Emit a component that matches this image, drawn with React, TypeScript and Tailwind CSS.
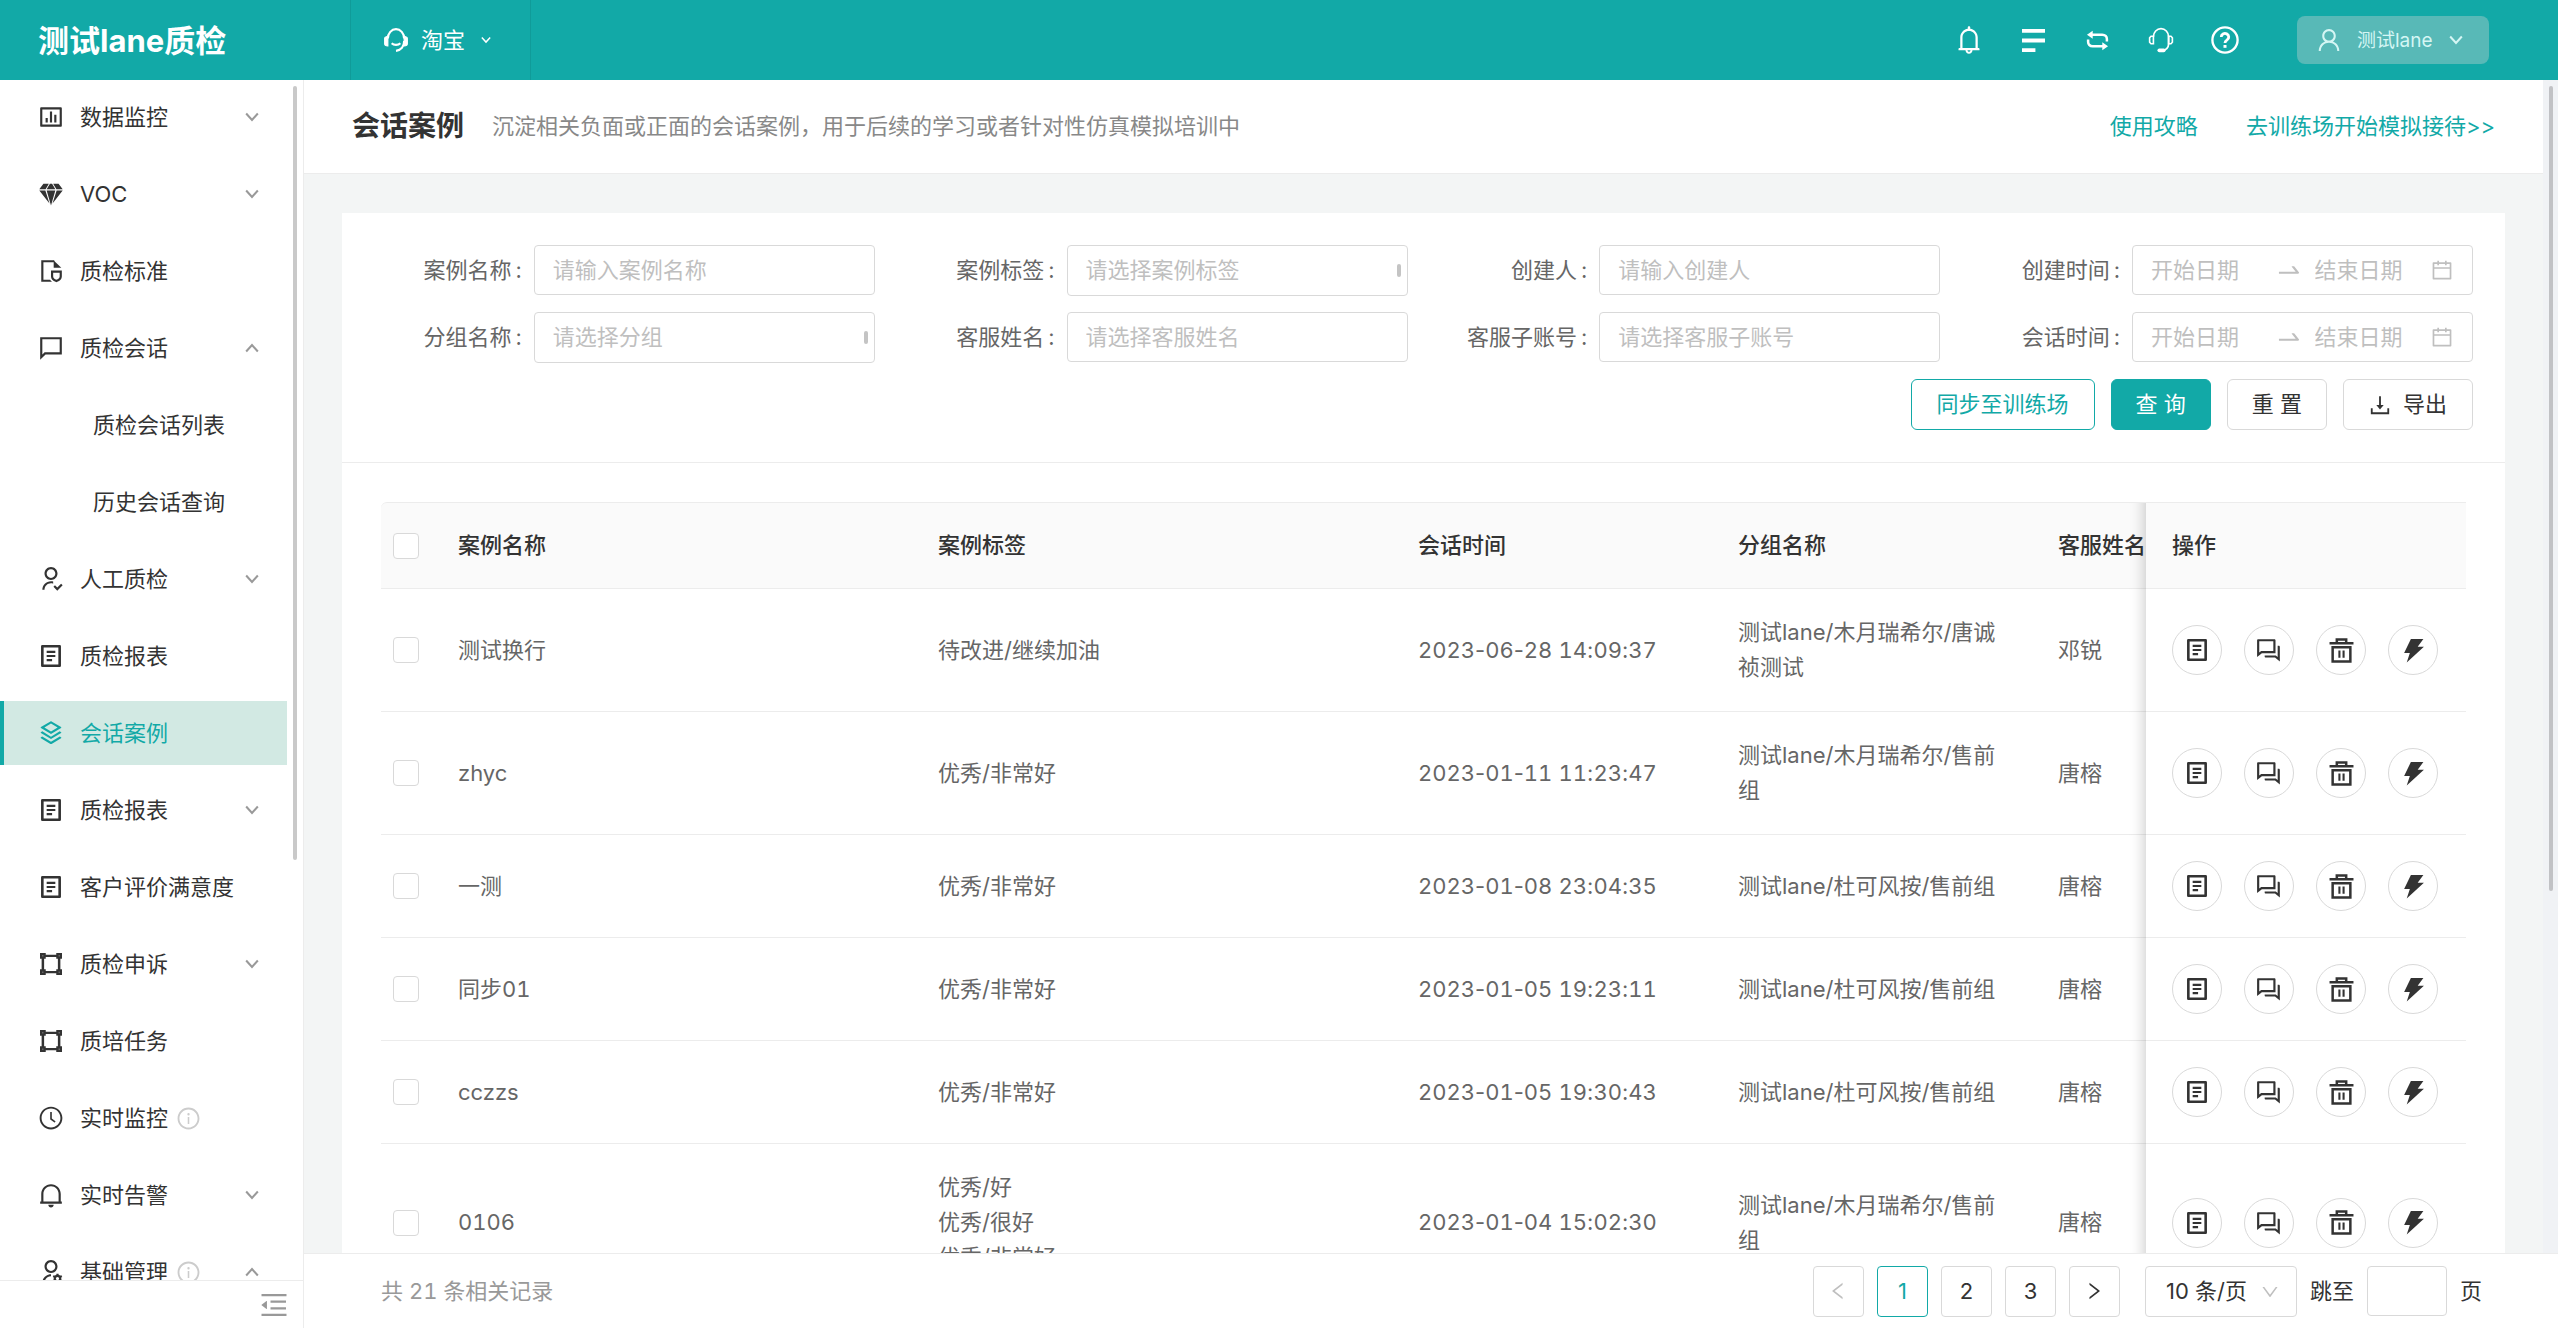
import type { ReactNode } from "react"
import clsx from "clsx"
import {
  AiOutlineBell,
  AiOutlineCalendar,
  AiOutlineClockCircle,
  AiOutlineDown,
  AiOutlineInfoCircle,
  AiOutlineLeft,
  AiOutlineMenuFold,
  AiOutlineRight,
  AiOutlineSwapRight,
  AiOutlineUser,
} from "react-icons/ai"
import {
  RiBarChartBoxLine,
  RiNotification2Line,
  RiQuestionAnswerLine,
  RiStackLine,
  RiUserFollowLine,
  RiUserSettingsLine,
} from "react-icons/ri"

interface IconProps {
  className?: string
}

function Svg({ className, children }: IconProps & { children: ReactNode }) {
  return (
    <svg
      viewBox="0 0 24 24"
      className={className}
      fill="none"
      stroke="currentColor"
      strokeWidth="2"
      aria-hidden="true"
    >
      {children}
    </svg>
  )
}

function Chevron({ className }: IconProps) {
  return (
    <Svg className={className}>
      <path d="m2 6 10 11L22 6" strokeWidth="3.5" />
    </Svg>
  )
}

function GemIcon({ className }: IconProps) {
  return (
    <svg viewBox="0 0 24 24" className={className} fill="currentColor" aria-hidden="true">
      <path d="M5 2.5h5L7 7.5H1.2zM11 2.5h2l3 5H8zM14 2.5h5l3.8 5H17zM1.2 8.7h5.6l3.8 12zM8 8.7h8l-4 14zM17.2 8.7h5.6l-9.4 12z" />
    </svg>
  )
}

function FileShieldIcon({ className }: IconProps) {
  return (
    <Svg className={className}>
      <path d="M13 21H4V3h11" />
      <path d="M14.5 2.2 21.5 9h-7z" fill="currentColor" stroke="none" />
      <path d="M13 12.5h8V17c0 2-1.5 3.5-4 4.5-2.5-1-4-2.500-4-4.500z" stroke="#fff" strokeWidth="5" />
      <path d="M13 12.5h8V17c0 2-1.5 3.200-4 4.200-2.500-1-4-2.200-4-4.200z" />
    </Svg>
  )
}

function ChatIcon({ className }: IconProps) {
  return (
    <Svg className={className}>
      <path d="M3 20.5V3h18v14H6.5z" />
    </Svg>
  )
}

function DocIcon({ className }: IconProps) {
  return (
    <Svg className={className}>
      <path d="M4 3h16v18H4z" strokeWidth="2.4" strokeLinejoin="round" />
      <path d="M8 8.2h8M8 12h8M8 15.800h5" />
    </Svg>
  )
}

function FrameIcon({ className }: IconProps) {
  return (
    <Svg className={className}>
      <path d="M3 3h3v3H3zM18 3h3v3h-3zM3 18h3v3H3zM18 18h3v3h-3zM7 4.500h10M7 19.500h10M4.500 7v10M19.500 7v10" strokeWidth="2.300" />
    </Svg>
  )
}

function TrashIcon({ className }: IconProps) {
  return (
    <Svg className={className}>
      <path d="M0.500 5h23M7.500 4V1.500h9V4M3.500 8.800h17v13.700h-17z" strokeWidth="2.400" />
      <path d="M10 12v7M14 12v7" />
    </Svg>
  )
}

function BoltIcon({ className }: IconProps) {
  return (
    <svg viewBox="0 0 24 24" className={className} fill="currentColor" aria-hidden="true">
      <path d="M9.500 1h12L16 8.500h6L5.500 23.500l3-9H3z" />
    </svg>
  )
}

function ExportIcon({ className }: IconProps) {
  return (
    <Svg className={className}>
      <path d="M12 2.500v12M3 15.500V21h18v-5.500" />
      <path d="m8 12 4 5 4-5z" fill="currentColor" stroke="none" />
    </Svg>
  )
}

function AgentIcon({ className }: IconProps) {
  return (
    <Svg className={className}>
      <path d="M4.500 10.500a7.500 8.500 0 0 1 15 0M19.500 13c0 5-3 8.500-7.500 9" />
      <path d="M1.500 10.500c0-1.500 3-2 3-2v9c-2 0-3-1-3-2zM22.500 10.500c0-1.500-3-2-3-2v9c2 0 3-1 3-2z" fill="currentColor" strokeWidth="1" />
      <path d="M8 15c2 2 6 2 8 0" />
    </Svg>
  )
}

function HeadsetIcon({ className }: IconProps) {
  return (
    <Svg className={className}>
      <path d="M5 9a7 7.500 0 0 1 14 0v7c0 3-2.500 5.500-6 5.500" strokeWidth="1.600" />
      <path d="M5 8.500H2.800L1.500 10v4l1.300 1.500H5zM19 8.500h2.200L22.500 10v4l-1.300 1.500H19z" strokeWidth="1.500" />
      <path d="M10.500 21.500h4" strokeWidth="3.500" strokeLinecap="round" />
    </Svg>
  )
}

function ListIcon({ className }: IconProps) {
  return (
    <Svg className={className}>
      <path d="M0 2h24M0 12h24M0 22h14" strokeWidth="4" />
    </Svg>
  )
}

function LoopIcon({ className }: IconProps) {
  return (
    <Svg className={className}>
      <path d="M6 6h11c3 0 4.800 2 4.800 4.500V13M18 18H7c-3 0-4.800-2-4.800-4.500V11" strokeWidth="2.600" />
      <path d="M7 1.800v8.400L1 6zM17 13.800v8.400L23 18z" fill="currentColor" stroke="none" />
    </Svg>
  )
}

function HelpIcon({ className }: IconProps) {
  return (
    <Svg className={className}>
      <circle cx="12" cy="12" r="10.800" />
      <path d="M8.800 9.500a3.200 3 0 1 1 5 2.400c-1.200.8-1.800 1.200-1.800 2.600" strokeWidth="2.400" />
      <path d="M12 16.300v2.400" strokeWidth="2.600" />
    </Svg>
  )
}

interface NavItem {
  label: string
  icon?: (props: IconProps) => ReactNode
  arrow?: "down" | "up"
  info?: boolean
  active?: boolean
}

const navItems: NavItem[] = [
  { label: "数据监控", icon: RiBarChartBoxLine, arrow: "down" },
  { label: "VOC", icon: GemIcon, arrow: "down" },
  { label: "质检标准", icon: FileShieldIcon },
  { label: "质检会话", icon: ChatIcon, arrow: "up" },
  { label: "质检会话列表" },
  { label: "历史会话查询" },
  { label: "人工质检", icon: RiUserFollowLine, arrow: "down" },
  { label: "质检报表", icon: DocIcon },
  { label: "会话案例", icon: RiStackLine, active: true },
  { label: "质检报表", icon: DocIcon, arrow: "down" },
  { label: "客户评价满意度", icon: DocIcon },
  { label: "质检申诉", icon: FrameIcon, arrow: "down" },
  { label: "质培任务", icon: FrameIcon },
  { label: "实时监控", icon: AiOutlineClockCircle, info: true },
  { label: "实时告警", icon: RiNotification2Line, arrow: "down" },
  { label: "基础管理", icon: RiUserSettingsLine, arrow: "up", info: true },
]

const rows = [
  { name: "测试换行", tags: ["待改进/继续加油"], time: "2023-06-28 14:09:37", group: "测试lane/木月瑞希尔/唐诚祯测试", staff: "邓锐" },
  { name: "zhyc", tags: ["优秀/非常好"], time: "2023-01-11 11:23:47", group: "测试lane/木月瑞希尔/售前组", staff: "唐榕" },
  { name: "一测", tags: ["优秀/非常好"], time: "2023-01-08 23:04:35", group: "测试lane/杜可风按/售前组", staff: "唐榕" },
  { name: "同步01", tags: ["优秀/非常好"], time: "2023-01-05 19:23:11", group: "测试lane/杜可风按/售前组", staff: "唐榕" },
  { name: "cczzs", tags: ["优秀/非常好"], time: "2023-01-05 19:30:43", group: "测试lane/杜可风按/售前组", staff: "唐榕" },
  { name: "0106", tags: ["优秀/好", "优秀/很好", "优秀/非常好"], time: "2023-01-04 15:02:30", group: "测试lane/木月瑞希尔/售前组", staff: "唐榕" },
]

const rowActions = [
  { label: "详情", icon: DocIcon, size: "size-[26px]" },
  { label: "会话", icon: RiQuestionAnswerLine, size: "size-[26px]" },
  { label: "删除", icon: TrashIcon, size: "size-[25px]" },
  { label: "同步", icon: BoltIcon, size: "size-[25px]" },
]

function Header() {
  const tools = [
    { label: "通知", icon: AiOutlineBell, size: "size-8" },
    { label: "任务", icon: ListIcon, size: "size-[23px]" },
    { label: "切换", icon: LoopIcon, size: "size-[23px]" },
    { label: "客服", icon: HeadsetIcon, size: "size-[26px]" },
    { label: "帮助", icon: HelpIcon, size: "size-7" },
  ]
  return (
    <header className="flex h-20 shrink-0 items-center bg-[#12a9a7] text-white">
      <h1 className="w-[350px] pl-[38px] text-[31px] leading-none font-bold">测试lane质检</h1>
      <button className="flex h-full w-[181px] items-center border-x border-[#109b99] pl-8">
        <AgentIcon className="size-[26px]" />
        <span className="ml-3">淘宝</span>
        <Chevron className="ml-4 size-[10px]" />
      </button>
      <div className="ml-auto flex gap-8">
        {tools.map(({ label, icon: Icon, size }) => (
          <button key={label} aria-label={label} className="flex size-8 items-center justify-center">
            <Icon className={size} />
          </button>
        ))}
      </div>
      <button className="mr-[69px] ml-14 flex h-12 w-48 items-center rounded-lg bg-[#58b9b7] pl-[18px] text-[19px] text-[#d5f6f4]">
        <AiOutlineUser className="size-7" />
        <span className="ml-[14px]">测试lane</span>
        <Chevron className="ml-4 size-[14px]" />
      </button>
    </header>
  )
}

function Sidebar() {
  return (
    <aside className="relative flex w-[304px] shrink-0 flex-col border-r border-[#ececec]">
      <nav className="min-h-0 flex-1 overflow-hidden pt-[5px]">
        <ul className="flex flex-col gap-[13px]">
          {navItems.map(({ label, icon: Icon, arrow, info, active }, i) => (
            <li key={i} className="mr-4">
              <a
                href="#"
                className={clsx(
                  "flex h-16 items-center border-l-4 pr-7",
                  active ? "border-[#12a9a7] bg-[#d2e9e3] text-[#12a9a7]" : "border-transparent text-[#333]",
                  Icon ? "pl-[34px]" : "pl-[89px]",
                )}
              >
                {Icon && <Icon className="mr-4 size-[26px]" />}
                <span>{label}</span>
                {info && <AiOutlineInfoCircle className="ml-2 size-[25px] text-[#ccc]" />}
                {arrow && (
                  <Chevron className={clsx("ml-auto size-[14px] text-[#999]", arrow === "up" && "rotate-180")} />
                )}
              </a>
            </li>
          ))}
        </ul>
      </nav>
      <div className="absolute top-[6px] right-[6px] h-[62%] w-1 rounded-full bg-[#c9c9c9]" />
      <div className="flex h-12 items-center justify-end border-t border-[#ececec] pr-[13px]">
        <button aria-label="收起菜单">
          <AiOutlineMenuFold className="size-8 text-[#999]" />
        </button>
      </div>
    </aside>
  )
}

interface FieldProps {
  id: string
  label: string
  children: ReactNode
}

function Field({ id, label, children }: FieldProps) {
  return (
    <div className="flex items-start">
      <label htmlFor={id} className="flex h-[50px] flex-1 items-center justify-end text-[#666]">
        {label}
        <span className="mr-3 ml-1">:</span>
      </label>
      <div className="relative w-[64%]">{children}</div>
    </div>
  )
}

function TextField({ id, label, placeholder }: { id: string; label: string; placeholder: string }) {
  return (
    <Field id={id} label={label}>
      <input
        id={id}
        placeholder={placeholder}
        className="h-[50px] w-full rounded-sm border border-[#d9d9d9] px-[18px] placeholder:text-[#bfbfbf]"
      />
    </Field>
  )
}

interface SelectFieldProps {
  id: string
  label: string
  placeholder: string
  thumb?: boolean
}

function SelectField({ id, label, placeholder, thumb }: SelectFieldProps) {
  return (
    <Field id={id} label={label}>
      <select
        id={id}
        className={clsx(
          "block w-full appearance-none rounded-sm border border-[#d9d9d9] px-[18px] text-[#bfbfbf]",
          thumb ? "h-[51px]" : "h-[50px]",
        )}
      >
        <option>{placeholder}</option>
      </select>
      {thumb && <span className="absolute top-[19px] right-[7px] h-[13px] w-1 rounded-full bg-[#c4c4c4]" />}
    </Field>
  )
}

function RangeField({ id, label }: { id: string; label: string }) {
  return (
    <Field id={id} label={label}>
      <div className="flex h-[50px] items-center rounded-sm border border-[#d9d9d9] px-[18px] text-[#bfbfbf]">
        <input id={id} placeholder="开始日期" className="w-0 min-w-0 flex-1 placeholder:text-[#bfbfbf]" />
        <AiOutlineSwapRight className="mr-3 ml-2 size-7 shrink-0" />
        <input placeholder="结束日期" aria-label="结束日期" className="w-0 min-w-0 flex-1 placeholder:text-[#bfbfbf]" />
        <AiOutlineCalendar className="size-6 shrink-0" />
      </div>
    </Field>
  )
}

function SearchForm() {
  return (
    <form className="border-b border-[#ececec] py-8 pr-8">
      <div className="grid grid-cols-4 gap-y-4">
        <TextField id="name" label="案例名称" placeholder="请输入案例名称" />
        <SelectField id="tag" label="案例标签" placeholder="请选择案例标签" thumb />
        <TextField id="creator" label="创建人" placeholder="请输入创建人" />
        <RangeField id="created" label="创建时间" />
        <SelectField id="group" label="分组名称" placeholder="请选择分组" thumb />
        <SelectField id="staff" label="客服姓名" placeholder="请选择客服姓名" />
        <SelectField id="account" label="客服子账号" placeholder="请选择客服子账号" />
        <RangeField id="chatTime" label="会话时间" />
      </div>
      <div className="mt-4 flex h-[51px] justify-end gap-4 text-[#333]">
        <button type="button" className="rounded-md border border-[#12a9a7] px-[25px] text-[#12a9a7]">
          同步至训练场
        </button>
        <button type="button" className="rounded-md border border-[#12a9a7] bg-[#12a9a7] px-6 text-white">
          查 询
        </button>
        <button type="button" className="rounded-md border border-[#d9d9d9] px-6">
          重 置
        </button>
        <button type="button" className="flex items-center gap-3 rounded-md border border-[#d9d9d9] px-[25px]">
          <ExportIcon className="size-[22px]" />
          导出
        </button>
      </div>
    </form>
  )
}

function Checkbox({ label }: { label: string }) {
  return (
    <input
      type="checkbox"
      aria-label={label}
      className="block size-[26px] appearance-none rounded-sm border border-[#d9d9d9] bg-white"
    />
  )
}

// only the digits are tabular, so dashes and colons keep their own width
function TimeText({ value }: { value: string }) {
  return (
    <time>
      {value.split(/(\d+)/).map((part, i) => (
        <span key={i} className={clsx(/\d/.test(part) && "tabular-nums")}>
          {part}
        </span>
      ))}
    </time>
  )
}

// shadow that the pinned column casts on the cells scrolled under it
const pinned =
  "sticky right-0 before:pointer-events-none before:absolute before:top-0 before:-bottom-px before:-left-12 before:w-12 before:shadow-[inset_-16px_0_13px_-13px_rgba(0,0,0,0.18)]"

function CaseTable() {
  const th = "h-[87px] border-y border-[#ececec] bg-[#fafafa] px-[26px] font-medium text-[#333]"
  const td = "border-b border-[#ececec] px-[26px] py-[26px]"
  return (
    <div className="mx-[39px] mt-[39px] overflow-x-auto [scrollbar-width:none]">
      <table className="w-[2291px] min-w-full table-fixed border-separate border-spacing-0 text-left leading-[35px] text-[#666]">
        <colgroup>
          <col className="w-[51px]" />
          <col className="w-[480px]" />
          <col className="w-[480px]" />
          <col className="w-[320px]" />
          <col className="w-[320px]" />
          <col className="w-[320px]" />
          <col className="w-[320px]" />
        </colgroup>
        <thead>
          <tr>
            <th className="h-[87px] rounded-tl-md border-y border-[#ececec] bg-[#fafafa] pl-3">
              <Checkbox label="全选" />
            </th>
            <th className={th}>案例名称</th>
            <th className={th}>案例标签</th>
            <th className={th}>会话时间</th>
            <th className={th}>分组名称</th>
            <th className={th}>客服姓名</th>
            <th className={clsx(th, pinned)}>操作</th>
          </tr>
        </thead>
        <tbody>
          {rows.map((row) => (
            <tr key={row.name}>
              <td className="border-b border-[#ececec] pl-3">
                <Checkbox label={row.name} />
              </td>
              <td className={clsx(td, "tabular-nums")}>{row.name}</td>
              <td className={td}>
                {row.tags.map((tag) => (
                  <div key={tag}>{tag}</div>
                ))}
              </td>
              <td className={td}>
                <TimeText value={row.time} />
              </td>
              <td className={td}>{row.group}</td>
              <td className={td}>{row.staff}</td>
              <td className={clsx(td, pinned, "bg-white")}>
                <div className="flex gap-[22px] text-[#333]">
                  {rowActions.map(({ label, icon: Icon, size }) => (
                    <button
                      key={label}
                      aria-label={label}
                      className="flex size-[50px] items-center justify-center rounded-full border border-[#d9d9d9]"
                    >
                      <Icon className={size} />
                    </button>
                  ))}
                </div>
              </td>
            </tr>
          ))}
        </tbody>
      </table>
    </div>
  )
}

function Pagination() {
  const item = "flex h-[51px] w-[51px] items-center justify-center rounded-sm border"
  return (
    <footer className="flex h-[75px] shrink-0 items-center border-t border-[#ececec] bg-white pr-[76px] pl-[77px] text-[#333]">
      <span className="mr-auto text-[#999] tabular-nums">共 21 条相关记录</span>
      <div className="flex items-center gap-[13px]">
        <button aria-label="上一页" className={clsx(item, "border-[#d9d9d9] text-[#bfbfbf]")}>
          <AiOutlineLeft className="size-[22px]" />
        </button>
        <button className={clsx(item, "border-[#12a9a7] text-[#12a9a7]")}>1</button>
        <button className={clsx(item, "border-[#d9d9d9]")}>2</button>
        <button className={clsx(item, "border-[#d9d9d9]")}>3</button>
        <button aria-label="下一页" className={clsx(item, "border-[#d9d9d9]")}>
          <AiOutlineRight className="size-[22px]" />
        </button>
        <div className="relative ml-3">
          <select
            aria-label="每页条数"
            className="block h-[51px] w-[152px] appearance-none rounded-sm border border-[#d9d9d9] pl-5"
          >
            <option>10 条/页</option>
          </select>
          <AiOutlineDown className="pointer-events-none absolute top-4 right-[17px] size-5 text-[#bfbfbf]" />
        </div>
        <label htmlFor="page">跳至</label>
        <input id="page" className="h-[50px] w-20 rounded-sm border border-[#d9d9d9] px-3" />
        <span>页</span>
      </div>
    </footer>
  )
}

export default function App() {
  return (
    <div className="flex h-screen flex-col overflow-hidden bg-white font-['Inter','Noto_Sans_CJK_SC',sans-serif] text-[22px] leading-[35px]">
      <Header />
      <div className="flex min-h-0 flex-1">
        <Sidebar />
        <div className="flex min-w-0 flex-1 flex-col">
          <div className="flex min-h-0 flex-1">
            <main className="min-w-0 flex-1 overflow-hidden bg-[#f3f5f5]">
              <div className="flex h-[94px] items-center border-b border-[#ececec] bg-white pr-12 pl-12">
                <h2 className="text-[28px] font-semibold text-[#333]">会话案例</h2>
                <p className="ml-7 text-[#888]">沉淀相关负面或正面的会话案例，用于后续的学习或者针对性仿真模拟培训中</p>
                <div className="ml-auto flex gap-12 text-[#12a9a7]">
                  <a href="#">使用攻略</a>
                  <a href="#">去训练场开始模拟接待&gt;&gt;</a>
                </div>
              </div>
              <div className="mx-[38px] mt-[39px] bg-white">
                <SearchForm />
                <CaseTable />
              </div>
            </main>
            <div className="w-[15px] bg-[#f0f2f5] pt-[6px] pl-[6px]">
              <div className="h-[69%] w-1 rounded-full bg-[#c1c2c5]" />
            </div>
          </div>
          <Pagination />
        </div>
      </div>
    </div>
  )
}
